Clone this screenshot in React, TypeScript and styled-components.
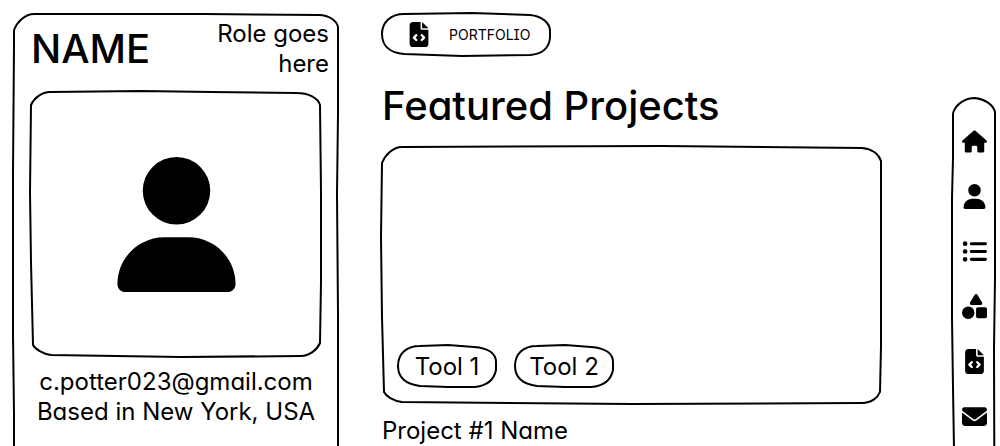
import React from "react";
import styled, { createGlobalStyle } from "styled-components";
import { FaHouse, FaUser, FaListUl, FaShapes, FaFileCode, FaEnvelope } from "react-icons/fa6";

const GlobalStyle = createGlobalStyle`
  * { box-sizing: border-box; }
  body {
    margin: 0;
    background: #fff;
    color: #000;
    font-family: Inter, "Liberation Sans", sans-serif;
    font-feature-settings: "cv11", "cv08";
    font-size: 24px;
    line-height: 30px;
  }
  h1, h2, h3, p, ul { margin: 0; padding: 0; font-weight: 400; }
`;

/* Pen-drawn outlines, each traced in the proportions of the box it surrounds. */
const outlines = {
  card: {
    box: "0 0 325 600",
    d: "M1 16C4 8 12 0 21 0L150 0L190 0L306 1C316 1 324 7 325 13L325 100L324 180L325 300L325 600M1 16L1 30L0 160L0 320L1 400L1 600",
  },
  photo: {
    box: "0 0 290 264",
    d: "M0 13C3 6 11 0 19 0L110 -1L180 0L265 1C278 1 287 6 289 13L290 100L290 190L289 251C286 258 278 264 270 264L150 265L20 263C12 262 4 257 2 253L0 170L-1 100Z",
  },
  pill: {
    box: "0 0 168 41",
    d: "M0 20C0 8 9 0 22 0L90 -1L148 1C160 2 168 9 168 17L168 24C167 34 160 40 148 41L80 42L22 40C8 39 0 32 0 20Z",
  },
  project: {
    box: "0 0 499 256",
    d: "M0 16C3 8 11 0 20 0L280 -1L480 1C491 2 497 8 499 14L499 200L498 245C496 250 490 256 480 256L250 257L20 255C11 254 4 249 2 245L0 170L-1 90Z",
  },
  tool: {
    box: "0 0 98 41",
    d: "M0 20C0 8 8 0 22 0L50 -1L76 1C91 2 98 8 98 16L98 24C96 34 89 40 76 41L50 41L22 40C7 38 0 31 0 20Z",
  },
  rail: {
    box: "0 0 42 600",
    d: "M0 15C3 6 12 0 22 0C31 1 40 6 42 14L42 180L41 250L42 600M0 15L0 60L-1 100L-1 220L0 290L1 350L1 600",
  },
};

const Ink = styled.svg`
  position: absolute;
  inset: 0;
  width: 100%;
  height: 100%;
  overflow: visible;
  pointer-events: none;
  fill: none;
  stroke: #000;
  stroke-width: 2;
  stroke-linejoin: round;
`;

function Outline({ shape }: { shape: keyof typeof outlines }) {
  return (
    <Ink viewBox={outlines[shape].box} preserveAspectRatio="none" aria-hidden="true">
      <path d={outlines[shape].d} vectorEffect="non-scaling-stroke" />
    </Ink>
  );
}

const Page = styled.div`
  display: grid;
  grid-template-columns: minmax(0, 325fr) minmax(0, 527fr) 42px;
  column-gap: 44px;
  height: 100vh;
  padding: 14px 5px 0 13px;
  overflow: hidden;
`;

const Card = styled.aside`
  position: relative;
  height: 600px;
  padding: 5px 17px 0 18px;
`;

const CardHeader = styled.header`
  display: flex;
  justify-content: space-between;
  margin-right: -8px;
`;

const Name = styled.h1`
  font-size: 40px;
  font-weight: 500;
  line-height: 60px;
`;

const Role = styled.p`
  width: 130px;
  text-align: right;
`;

const Photo = styled.div`
  position: relative;
  display: flex;
  align-items: center;
  justify-content: center;
  height: 264px;
  margin-top: 13px;
  font-size: 135px;
`;

const Contact = styled.address`
  margin-top: 11px;
  font-style: normal;
  text-align: center;
  white-space: nowrap;
`;

const MailLink = styled.a`
  color: inherit;
  text-decoration: none;
`;

const Main = styled.main`
  min-width: 0;
  padding-right: 28px;
`;

const SectionButton = styled.button`
  position: relative;
  display: flex;
  align-items: center;
  gap: 18px;
  width: 168px;
  height: 41px;
  padding: 0 0 0 25px;
  border: 0;
  background: none;
  color: inherit;
  font-family: inherit;
  font-size: 14px;
  font-feature-settings: inherit;
`;

const ButtonIcon = styled(FaFileCode)`
  width: 24px;
  height: 25px;
`;

const Heading = styled.h2`
  margin-top: 26px;
  font-size: 40px;
  font-weight: 500;
  line-height: 50px;
`;

const Project = styled.article`
  margin-top: 16px;
`;

const Preview = styled.div`
  position: relative;
  display: flex;
  align-items: flex-end;
  height: 256px;
  padding: 16px;
`;

const Tools = styled.ul`
  display: flex;
  gap: 19px;
  list-style: none;
`;

const Tool = styled.li`
  position: relative;
  width: 98px;
  line-height: 41px;
  text-align: center;
`;

const ProjectName = styled.h3`
  margin-top: 13px;
  font-size: 24px;
`;

const Rail = styled.nav`
  position: relative;
  display: flex;
  flex-direction: column;
  align-items: center;
  gap: 30px;
  height: 600px;
  margin-top: 84px;
  padding-top: 31px;
`;

const RailLink = styled.a`
  display: flex;
  color: inherit;
  font-size: 25px;
`;

const links = [
  { label: "Home", Icon: FaHouse },
  { label: "About", Icon: FaUser },
  { label: "Experience", Icon: FaListUl },
  { label: "Skills", Icon: FaShapes },
  { label: "Portfolio", Icon: FaFileCode },
  { label: "Contact", Icon: FaEnvelope },
];

export default function App() {
  return (
    <>
      <GlobalStyle />
      <Page>
        <Card>
          <Outline shape="card" />
          <CardHeader>
            <Name>NAME</Name>
            <Role>Role goes here</Role>
          </CardHeader>
          <Photo>
            <Outline shape="photo" />
            <FaUser aria-hidden="true" />
          </Photo>
          <Contact>
            <MailLink href="mailto:c.potter023@gmail.com">c.potter023@gmail.com</MailLink>
            <p>Based in New York, USA</p>
          </Contact>
        </Card>
        <Main>
          <SectionButton type="button">
            <Outline shape="pill" />
            <ButtonIcon aria-hidden="true" />
            PORTFOLIO
          </SectionButton>
          <Heading>Featured Projects</Heading>
          <Project>
            <Preview>
              <Outline shape="project" />
              <Tools>
                {["Tool 1", "Tool 2"].map((tool) => (
                  <Tool key={tool}>
                    <Outline shape="tool" />
                    {tool}
                  </Tool>
                ))}
              </Tools>
            </Preview>
            <ProjectName>Project #1 Name</ProjectName>
          </Project>
        </Main>
        <Rail aria-label="Sections">
          <Outline shape="rail" />
          {links.map(({ label, Icon }) => (
            <RailLink key={label} href={`#${label.toLowerCase()}`} aria-label={label}>
              <Icon aria-hidden="true" />
            </RailLink>
          ))}
        </Rail>
      </Page>
    </>
  );
}
